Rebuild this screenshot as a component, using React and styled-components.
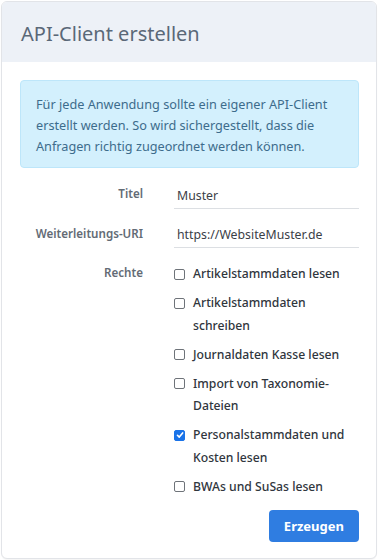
import React, { useState } from "react";
import styled, { createGlobalStyle } from "styled-components";

const GlobalStyle = createGlobalStyle`
  html, body {
    margin: 0;
    padding: 0;
    background: #ffffff;
    font-family: "Noto Sans", "Open Sans", sans-serif;
  }
`;

const Page = styled.div`
  padding: 1px 2px 2px 1px;
`;

const Card = styled.div`
  border: 1px solid #e2e4e8;
  border-radius: 6px;
  background: #ffffff;
  overflow: hidden;
  min-height: calc(100vh - 5px);
  box-shadow: 0 1px 1px rgba(0, 0, 0, 0.04);
`;

const Header = styled.div`
  background: #edf1f7;
  height: 60px;
  display: flex;
  align-items: center;
  padding: 0 19px;
`;

const Title = styled.h1`
  margin: 0;
  font-size: 20px;
  font-weight: 400;
  color: #5a6878;
  padding-top: 2px;
`;

const Body = styled.div`
  padding: 18px 17px 16px 18px;
  display: flex;
  flex-direction: column;
`;

const Alert = styled.div`
  background: #d3f0fd;
  border: 1px solid #bde6fa;
  border-radius: 4px;
  padding: 13px 15px 10px;
  font-size: 12.7px;
  line-height: 21px;
  color: #3d6c8c;
`;

const Form = styled.div`
  display: grid;
  grid-template-columns: 123px 1fr;
  column-gap: 31px;
  row-gap: 12px;
  margin-top: 14px;
`;

const Label = styled.div`
  text-align: right;
  font-size: 11.6px;
  font-weight: 600;
  color: #636b75;
  padding-top: ${({ top }) => top || 0}px;
  line-height: 18px;
`;

const Input = styled.input`
  border: none;
  border-bottom: 1px solid #dcdfe3;
  outline: none;
  font-family: inherit;
  font-size: 12.3px;
  color: #3b4047;
  padding: 5px 0 4px 3px;
  width: 100%;
  box-sizing: border-box;
  background: transparent;
`;

const Checks = styled.div`
  display: flex;
  flex-direction: column;
  gap: 6.5px;
  margin-top: 3px;
`;

const CheckRow = styled.label`
  display: flex;
  align-items: flex-start;
  gap: 8px;
  font-size: 12.2px;
  font-weight: 500;
  line-height: 22.5px;
  color: #30363d;
  cursor: pointer;
`;

const Box = styled.span`
  flex: none;
  width: 9px;
  height: 9px;
  margin-top: 5.5px;
  border-radius: 2px;
  border: 1px solid ${({ checked }) => (checked ? "#1a73e8" : "#6e7379")};
  background: ${({ checked }) => (checked ? "#1a73e8" : "#ffffff")};
  display: flex;
  align-items: center;
  justify-content: center;
`;

const Footer = styled.div`
  display: flex;
  justify-content: flex-end;
  margin-top: 12px;
`;

const Button = styled.button`
  background: #2f7de1;
  color: #ffffff;
  border: none;
  border-radius: 4px;
  height: 32px;
  padding: 0 15px;
  font-family: inherit;
  font-size: 13px;
  font-weight: 700;
  cursor: pointer;
`;

const rights = [
  { label: "Artikelstammdaten lesen", checked: false },
  { label: "Artikelstammdaten schreiben", checked: false },
  { label: "Journaldaten Kasse lesen", checked: false },
  { label: "Import von Taxonomie-Dateien", checked: false },
  { label: "Personalstammdaten und Kosten lesen", checked: true },
  { label: "BWAs und SuSas lesen", checked: false },
];

const Check = () => (
  <svg width="8" height="8" viewBox="0 0 10 10">
    <path d="M1.8 5.3 L4.1 7.6 L8.3 2.4" fill="none" stroke="#fff" strokeWidth="2" strokeLinecap="round" strokeLinejoin="round" />
  </svg>
);

const App = () => {
  const [state, setState] = useState(rights);

  const toggle = (i) => {
    setState(state.map((r, j) => (j === i ? { ...r, checked: !r.checked } : r)));
  };

  return (
    <Page>
      <GlobalStyle />
      <Card>
        <Header>
          <Title>API-Client erstellen</Title>
        </Header>
        <Body>
          <Alert>
            Für jede Anwendung sollte ein eigener API-Client erstellt werden. So wird sichergestellt, dass die
            Anfragen richtig zugeordnet werden können.
          </Alert>
          <Form>
            <Label top={3}>Titel</Label>
            <Input defaultValue="Muster" />
            <Label top={4}>Weiterleitungs-URI</Label>
            <Input defaultValue="https://WebsiteMuster.de" />
            <Label top={4}>Rechte</Label>
            <Checks>
              {state.map((r, i) => (
                <CheckRow key={i} onClick={() => toggle(i)}>
                  <Box checked={r.checked}>{r.checked && <Check />}</Box>
                  <span>{r.label}</span>
                </CheckRow>
              ))}
            </Checks>
          </Form>
          <Footer>
            <Button>Erzeugen</Button>
          </Footer>
        </Body>
      </Card>
    </Page>
  );
};

export default App;
